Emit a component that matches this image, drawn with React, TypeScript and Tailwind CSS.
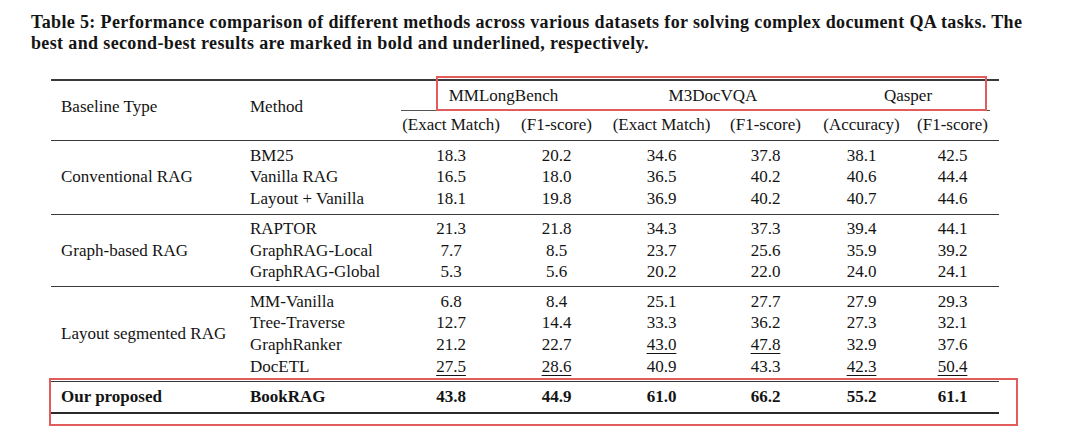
import React from "react";

const COLS = "grid grid-cols-[189px_158px_106px_105px_105px_103px_89px_93px]";

type Row = { method: string; vals: string[] };
type Section = { label: string; rows: Row[]; span: string; pt: string; pb: string };

const sections: Section[] = [
  {
    label: "Conventional RAG",
    span: "row-span-3",
    pt: "pt-[4px]",
    pb: "pb-[4.5px]",
    rows: [
      { method: "BM25", vals: ["18.3", "20.2", "34.6", "37.8", "38.1", "42.5"] },
      { method: "Vanilla RAG", vals: ["16.5", "18.0", "36.5", "40.2", "40.6", "44.4"] },
      { method: "Layout + Vanilla", vals: ["18.1", "19.8", "36.9", "40.2", "40.7", "44.6"] },
    ],
  },
  {
    label: "Graph-based RAG",
    span: "row-span-3",
    pt: "pt-[3px]",
    pb: "pb-[3px]",
    rows: [
      { method: "RAPTOR", vals: ["21.3", "21.8", "34.3", "37.3", "39.4", "44.1"] },
      { method: "GraphRAG-Local", vals: ["7.7", "8.5", "23.7", "25.6", "35.9", "39.2"] },
      { method: "GraphRAG-Global", vals: ["5.3", "5.6", "20.2", "22.0", "24.0", "24.1"] },
    ],
  },
  {
    label: "Layout segmented RAG",
    span: "row-span-4",
    pt: "pt-[4px]",
    pb: "pb-[4px]",
    rows: [
      { method: "MM-Vanilla", vals: ["6.8", "8.4", "25.1", "27.7", "27.9", "29.3"] },
      { method: "Tree-Traverse", vals: ["12.7", "14.4", "33.3", "36.2", "27.3", "32.1"] },
      { method: "GraphRanker", vals: ["21.2", "22.7", "u43.0", "u47.8", "32.9", "37.6"] },
      { method: "DocETL", vals: ["u27.5", "u28.6", "40.9", "43.3", "u42.3", "u50.4"] },
    ],
  },
];

function Val({ v }: { v: string }) {
  const u = v.startsWith("u");
  const t = u ? v.slice(1) : v;
  return (
    <div className="flex h-[21.6px] items-center justify-center">
      <span className={u ? "underline decoration-[1.2px] underline-offset-[3px]" : ""}>{t}</span>
    </div>
  );
}

export default function App() {
  return (
    <div
      className="relative h-[437px] w-[1080px] overflow-hidden bg-white text-[#141414]"
      style={{ fontFamily: '"Liberation Serif", "Times New Roman", serif' }}
    >
      {/* Caption */}
      <div className="pl-[31px] pt-[12px] text-[18px] font-bold leading-[20.5px] tracking-[0.36px]">
        Table 5: Performance comparison of different methods across various datasets for solving complex document QA tasks. The
        <br />
        best and second-best results are marked in bold and underlined, respectively.
      </div>

      {/* Table */}
      <div className="ml-[51px] mt-[26px] w-[948px] text-[17px] leading-[21.6px]">
        <div className="h-[2px] bg-[#3a3a3a]" />
        {/* Header */}
        <div className={`${COLS} grid-rows-[29.7px_29px]`}>
          <div className="row-span-2 pl-[10px] pt-[15px]">Baseline Type</div>
          <div className="row-span-2 pl-[10px] pt-[15px]">Method</div>
          <div className="col-span-2 flex flex-col justify-between">
            <div className="pt-[4px] text-center">MMLongBench</div>
            <div className="ml-[3px] mr-[4px] h-[1px] bg-[#555]" />
          </div>
          <div className="col-span-2 flex flex-col justify-between">
            <div className="pt-[4px] text-center">M3DocVQA</div>
            <div className="ml-[4px] mr-[5px] h-[1px] bg-[#555]" />
          </div>
          <div className="col-span-2 flex flex-col justify-between">
            <div className="pt-[4px] text-center">Qasper</div>
            <div className="ml-[4px] mr-[9px] h-[1px] bg-[#555]" />
          </div>
          <div className="pt-[3px] text-center">(Exact Match)</div>
          <div className="pt-[3px] text-center">(F1-score)</div>
          <div className="pt-[3px] text-center">(Exact Match)</div>
          <div className="pt-[3px] text-center">(F1-score)</div>
          <div className="pt-[3px] text-center">(Accuracy)</div>
          <div className="pt-[3px] text-center">(F1-score)</div>
        </div>

        {sections.map((s) => (
          <div key={s.label}>
            <div className="h-[1px] bg-[#3a3a3a]" />
            <div className={`${COLS} ${s.pt} ${s.pb}`}>
              <div className={`${s.span} flex items-center pl-[10px]`}>{s.label}</div>
              {s.rows.map((r) => (
                <React.Fragment key={r.method}>
                  <div className="flex h-[21.6px] items-center pl-[10px]">{r.method}</div>
                  {r.vals.map((v, i) => (
                    <Val key={i} v={v} />
                  ))}
                </React.Fragment>
              ))}
            </div>
          </div>
        ))}

        <div className="h-[1px] bg-[#3a3a3a]" />
        <div className={`${COLS} h-[29.5px] items-center font-bold`}>
          <div className="pl-[10px]">Our proposed</div>
          <div className="pl-[10px]">BookRAG</div>
          {["43.8", "44.9", "61.0", "66.2", "55.2", "61.1"].map((v, i) => (
            <div key={i} className="text-center">
              {v}
            </div>
          ))}
        </div>
        <div className="h-[2px] bg-[#2a2a2a]" />
      </div>

      {/* Red highlight boxes */}
      <div className="pointer-events-none absolute left-[436px] top-[76px] h-[35px] w-[551px] border-2 border-[#e25c5c]" />
      <div className="pointer-events-none absolute left-[49px] top-[378px] h-[48px] w-[969px] border-2 border-[#e25c5c]" />
    </div>
  );
}
